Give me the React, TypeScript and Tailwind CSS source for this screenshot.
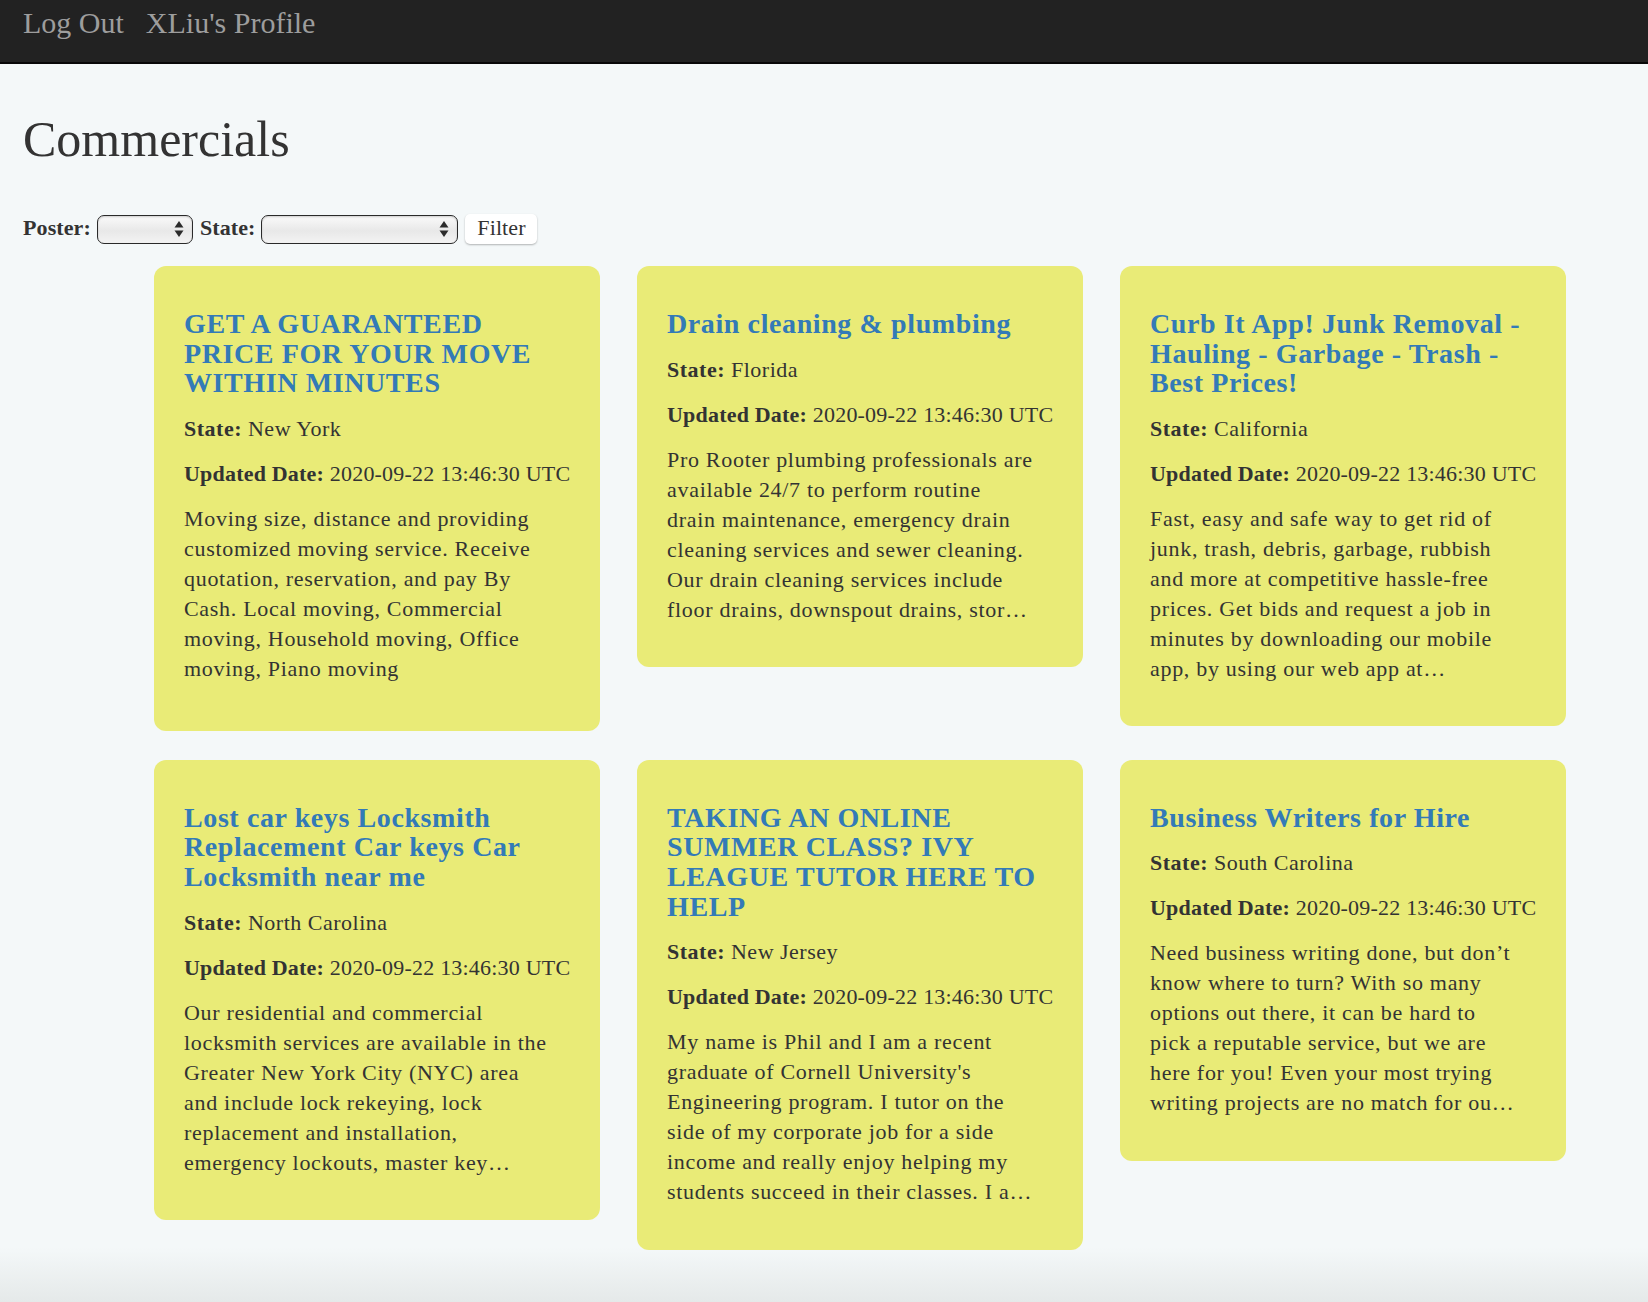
import { FC } from "react";

interface Commercial {
  id: number;
  title: string[];
  state: string;
  updatedAt: string;
  description: string[];
  truncated: boolean;
}

const UPDATED = "2020-09-22 13:46:30 UTC";

const COMMERCIALS: Commercial[] = [
  {
    id: 1,
    title: ["GET A GUARANTEED", "PRICE FOR YOUR MOVE", "WITHIN MINUTES"],
    state: "New York",
    updatedAt: UPDATED,
    description: [
      "Moving size, distance and providing",
      "customized moving service. Receive",
      "quotation, reservation, and pay By",
      "Cash. Local moving, Commercial",
      "moving, Household moving, Office",
      "moving, Piano moving",
    ],
    truncated: false,
  },
  {
    id: 2,
    title: ["Drain cleaning & plumbing"],
    state: "Florida",
    updatedAt: UPDATED,
    description: [
      "Pro Rooter plumbing professionals are",
      "available 24/7 to perform routine",
      "drain maintenance, emergency drain",
      "cleaning services and sewer cleaning.",
      "Our drain cleaning services include",
      "floor drains, downspout drains, stor…",
    ],
    truncated: true,
  },
  {
    id: 3,
    title: ["Curb It App! Junk Removal -", "Hauling - Garbage - Trash -", "Best Prices!"],
    state: "California",
    updatedAt: UPDATED,
    description: [
      "Fast, easy and safe way to get rid of",
      "junk, trash, debris, garbage, rubbish",
      "and more at competitive hassle-free",
      "prices. Get bids and request a job in",
      "minutes by downloading our mobile",
      "app, by using our web app at…",
    ],
    truncated: true,
  },
  {
    id: 4,
    title: ["Lost car keys Locksmith", "Replacement Car keys Car", "Locksmith near me"],
    state: "North Carolina",
    updatedAt: UPDATED,
    description: [
      "Our residential and commercial",
      "locksmith services are available in the",
      "Greater New York City (NYC) area",
      "and include lock rekeying, lock",
      "replacement and installation,",
      "emergency lockouts, master key…",
    ],
    truncated: true,
  },
  {
    id: 5,
    title: ["TAKING AN ONLINE", "SUMMER CLASS? IVY", "LEAGUE TUTOR HERE TO", "HELP"],
    state: "New Jersey",
    updatedAt: UPDATED,
    description: [
      "My name is Phil and I am a recent",
      "graduate of Cornell University's",
      "Engineering program. I tutor on the",
      "side of my corporate job for a side",
      "income and really enjoy helping my",
      "students succeed in their classes. I a…",
    ],
    truncated: true,
  },
  {
    id: 6,
    title: ["Business Writers for Hire"],
    state: "South Carolina",
    updatedAt: UPDATED,
    description: [
      "Need business writing done, but don’t",
      "know where to turn? With so many",
      "options out there, it can be hard to",
      "pick a reputable service, but we are",
      "here for you! Even your most trying",
      "writing projects are no match for ou…",
    ],
    truncated: true,
  },
];

const SelectArrows: FC = () => (
  <svg
    width="10"
    height="18"
    viewBox="0 0 10 18"
    className="pointer-events-none absolute right-[9px] top-1/2 -translate-y-1/2"
  >
    <path d="M5 1 L9.5 7.5 L0.5 7.5 Z" fill="#2b2b2b" />
    <path d="M5 17 L9.5 10.5 L0.5 10.5 Z" fill="#2b2b2b" />
  </svg>
);

const FilterSelect: FC<{ width: string }> = ({ width }) => (
  <div className={`relative h-[29px] ${width}`}>
    <select className="h-full w-full appearance-none rounded-[7px] border-[1.5px] border-[#2a2a2a] bg-[linear-gradient(180deg,#fafafa,#e8e8e8_55%,#f3f3f3)] shadow-[inset_0_1px_2px_rgba(0,0,0,0.18)] outline-none">
      <option value=""></option>
    </select>
    <SelectArrows />
  </div>
);

const CommercialCard: FC<{ item: Commercial }> = ({ item }) => (
  <div className="rounded-[12px] bg-[#e9eb77] p-[30px]">
    <h3 className="mt-[13px] mb-[16px] text-[28px] leading-[29.6px] font-bold tracking-[0.6px] text-[#337ab7]">
      {item.title.map((line) => (
        <span key={line} className="block whitespace-nowrap">
          {line}
        </span>
      ))}
    </h3>
    <p className="mb-[15px] tracking-[0.5px]">
      <b>State:</b> {item.state}
    </p>
    <p className="mb-[15px] whitespace-nowrap tracking-[0.2px]">
      <b>Updated Date:</b> {item.updatedAt}
    </p>
    <p className={`tracking-[0.7px] ${item.truncated ? "mb-[12.5px]" : "mb-[17px]"}`}>
      {item.description.map((line) => (
        <span key={line} className="block whitespace-nowrap">
          {line}
        </span>
      ))}
    </p>
  </div>
);

export default function App() {
  return (
    <div
      className="min-h-screen bg-[linear-gradient(180deg,#f4f8f9_calc(100%_-_55px),#e5e9e9_100%)] text-[#333333]"
      style={{ fontFamily: '"Liberation Serif", "Times New Roman", serif' }}
    >
      <nav className="h-[64px] border-b-2 border-[#080808] bg-[#222222] px-[23px] pt-[7px]">
        <div className="flex gap-[22px] text-[30px] leading-[32px] text-[#9d9d9d]">
          <a href="#">Log Out</a>
          <a href="#">XLiu's Profile</a>
        </div>
      </nav>

      <div className="px-[23px] pb-[50px]">
        <h1 className="mt-[48px] text-[50px] leading-[55px]">Commercials</h1>

        <form className="mt-[46px] flex h-[32px] items-center text-[22px] tracking-[0.1px]">
          <label className="mr-[6px] pb-1 font-bold">Poster:</label>
          <FilterSelect width="w-[96px]" />
          <label className="mr-[6px] ml-[7px] pb-1 font-bold">State:</label>
          <FilterSelect width="w-[197px]" />
          <button
            type="button"
            className="ml-[7px] h-[30px] w-[72px] rounded-[5px] bg-white pb-[2px] text-[22px] leading-none shadow-[0_1px_2px_rgba(0,0,0,0.28)]"
          >
            Filter
          </button>
        </form>

        <div className="mt-[21px] ml-[131px] grid grid-cols-[repeat(3,446px)] items-start gap-x-[37px] gap-y-[29px] text-[22px] leading-[30px]">
          {COMMERCIALS.map((item) => (
            <CommercialCard key={item.id} item={item} />
          ))}
        </div>
      </div>
    </div>
  );
}
